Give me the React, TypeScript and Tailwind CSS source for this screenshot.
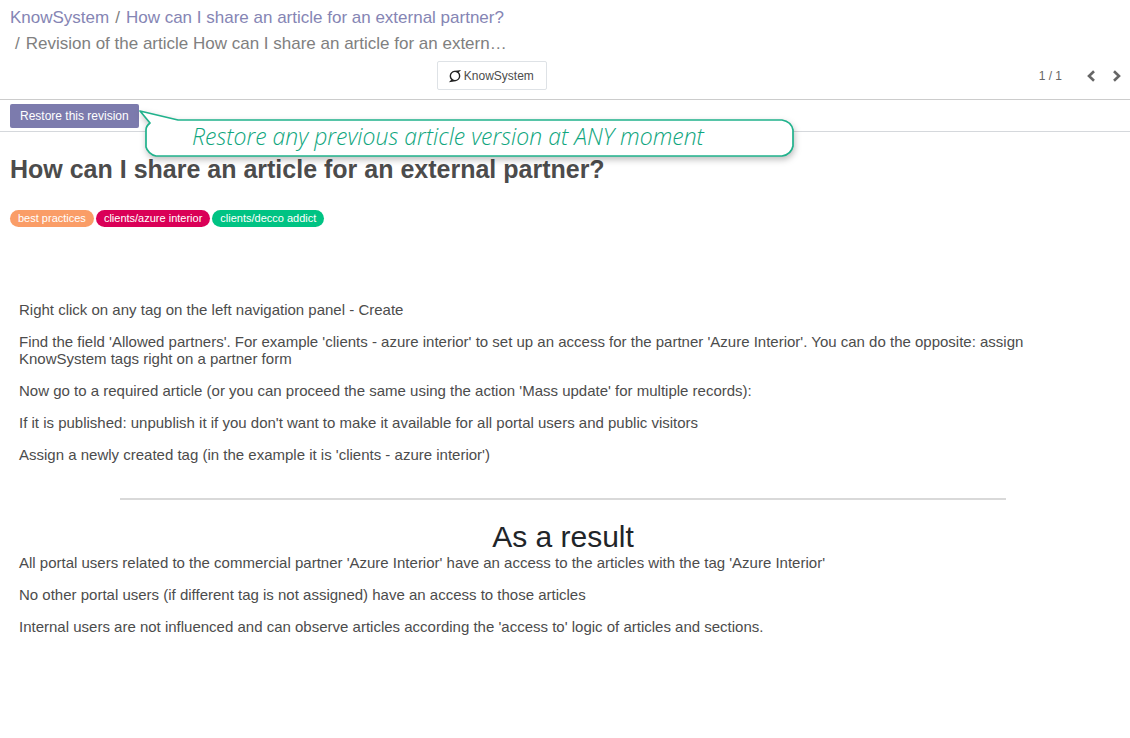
import { FaSuperpowers } from "react-icons/fa";

const tags = [
  { label: "best practices", style: "bg-[#fa9d67]" },
  { label: "clients/azure interior", style: "bg-[#da0057]" },
  { label: "clients/decco addict", style: "bg-[#00c383]" },
];

const steps = [
  "Right click on any tag on the left navigation panel - Create",
  "Find the field 'Allowed partners'. For example 'clients - azure interior' to set up an access for the partner 'Azure Interior'. You can do the opposite: assign KnowSystem tags right on a partner form",
  "Now go to a required article (or you can proceed the same using the action 'Mass update' for multiple records):",
  "If it is published: unpublish it if you don't want to make it available for all portal users and public visitors",
  "Assign a newly created tag (in the example it is 'clients - azure interior')",
];

const results = [
  "All portal users related to the commercial partner 'Azure Interior' have an access to the articles with the tag 'Azure Interior'",
  "No other portal users (if different tag is not assigned) have an access to those articles",
  "Internal users are not influenced and can observe articles according the 'access to' logic of articles and sections.",
];

function Chevron({ direction }: { direction: "left" | "right" }) {
  return (
    <svg viewBox="0 0 10 12" className="h-3 w-2.5" fill="none" stroke="currentColor" strokeWidth="2.6" aria-hidden="true">
      <path d={direction === "left" ? "M8 1.2 3 6l5 4.8" : "M2 1.2 7 6l-5 4.8"} />
    </svg>
  );
}

function Callout() {
  return (
    <div className="absolute top-2 left-[139px] h-[52px] w-[656px]">
      <svg viewBox="0 0 656 52" className="absolute inset-0 h-full w-full overflow-visible drop-shadow-[1px_3px_3px_rgba(0,0,0,0.25)]" aria-hidden="true">
        <path
          d="M1 3 39 12H643C649 13 653 17 654 22V38C653 43 649 47 643 48H17C12 47 8 43 7 39V22Q7 18 11 15Z"
          fill="white"
          stroke="#20b28c"
          strokeWidth="1.7"
          strokeLinejoin="round"
        />
      </svg>
      <p className="relative pt-3 pl-[53px] font-['Open_Sans','Noto_Sans',sans-serif] text-[23px] leading-8 font-light whitespace-nowrap text-[#10a67e] italic">
        Restore any previous article version at ANY moment
      </p>
    </div>
  );
}

export default function App() {
  return (
    <div className="min-h-screen bg-white font-['Liberation_Sans',Arial,sans-serif] text-[#4c4c4c]">
      <header className="border-b border-[#cccccc] pt-[5px] pr-2 pb-[9px] pl-2.5">
        <nav aria-label="Breadcrumb" className="text-[17px] leading-[26px] text-[#808080]">
          <div>
            <a href="#knowsystem" className="text-[#8585b4]">KnowSystem</a>
            <span className="px-1.5">/</span>
            <a href="#article" className="text-[#8585b4]">How can I share an article for an external partner?</a>
          </div>
          <div className="pl-[5px]">
            <span className="pr-1.5">/</span>
            Revision of the article How can I share an article for an extern…
          </div>
        </nav>
        <div className="mt-1 grid grid-cols-[426fr_auto_574fr] items-center">
          <button type="button" className="col-start-2 flex h-[29px] items-center gap-0.5 rounded-xs border border-[#dee2e6] pr-3 pl-2.5 text-xs text-[#4c4c4c]">
            <FaSuperpowers className="size-3.5 text-[#222222]" aria-hidden="true" />
            KnowSystem
          </button>
          <div className="flex items-center justify-end text-xs text-[#666666]">
            <span className="mr-6">1 / 1</span>
            <button type="button" aria-label="Previous" className="mr-4"><Chevron direction="left" /></button>
            <button type="button" aria-label="Next"><Chevron direction="right" /></button>
          </div>
        </div>
      </header>
      <div className="relative flex h-8 items-center border-b border-[#d5d8dc] px-2.5">
        <button type="button" className="h-6 rounded-xs bg-[#7c7bad] px-2.5 text-xs text-white">Restore this revision</button>
        <Callout />
      </div>
      <main className="px-2.5 pt-[19px]">
        <h1 className="text-[25px] leading-9 font-bold">How can I share an article for an external partner?</h1>
        <ul className="mt-[23px] flex gap-0.5">
          {tags.map((tag) => (
            <li key={tag.label} className={`rounded-full px-2 text-[11px] leading-[17px] text-white ${tag.style}`}>{tag.label}</li>
          ))}
        </ul>
        <article className="pt-[74px] pr-[13px] pl-[9px] text-[15px] leading-[17px] text-[#4c4c4c]">
          <div className="space-y-[15px]">
            {steps.map((step) => <p key={step}>{step}</p>)}
          </div>
          <hr className="mx-auto mt-[35px] mb-5 w-[81.5%] border-t-2 border-[#d9d9d9]" />
          <h2 className="text-center text-3xl leading-[34px] text-[#212529]">As a result</h2>
          <div className="space-y-[15px]">
            {results.map((result) => <p key={result}>{result}</p>)}
          </div>
        </article>
      </main>
    </div>
  );
}
